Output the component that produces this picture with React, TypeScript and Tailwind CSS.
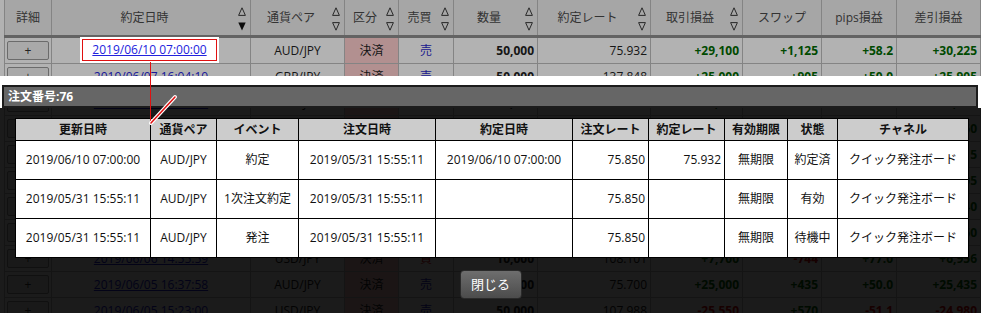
import React from "react";

type Row = {
  date: string;
  pair: string;
  side: "売" | "買";
  qty: string;
  rate: string;
  pl: string;
  swap: string;
  pips: string;
  net: string;
};

const rows: Row[] = [
  { date: "2019/06/10 07:00:00", pair: "AUD/JPY", side: "売", qty: "50,000", rate: "75.932", pl: "+29,100", swap: "+1,125", pips: "+58.2", net: "+30,225" },
  { date: "2019/06/07 16:04:10", pair: "GBP/JPY", side: "売", qty: "50,000", rate: "137.848", pl: "+25,000", swap: "+905", pips: "+50.0", net: "+25,905" },
  { date: "2019/06/07 11:20:41", pair: "USD/JPY", side: "買", qty: "10,000", rate: "108.250", pl: "+3,400", swap: "-120", pips: "+34.0", net: "+3,280" },
  { date: "2019/06/07 09:15:02", pair: "EUR/JPY", side: "売", qty: "20,000", rate: "122.105", pl: "+4,200", swap: "+60", pips: "+21.0", net: "+4,260" },
  { date: "2019/06/06 21:40:33", pair: "AUD/JPY", side: "売", qty: "30,000", rate: "75.640", pl: "+6,000", swap: "+315", pips: "+20.0", net: "+6,315" },
  { date: "2019/06/06 18:02:17", pair: "NZD/JPY", side: "売", qty: "30,000", rate: "71.880", pl: "+7,500", swap: "+405", pips: "+25.0", net: "+7,905" },
  { date: "2019/06/06 16:30:50", pair: "GBP/JPY", side: "買", qty: "10,000", rate: "137.210", pl: "+5,100", swap: "-60", pips: "+51.0", net: "+5,040" },
  { date: "2019/06/06 15:12:08", pair: "USD/JPY", side: "買", qty: "10,000", rate: "108.320", pl: "+2,400", swap: "-40", pips: "+24.0", net: "+2,360" },
  { date: "2019/06/06 14:55:59", pair: "USD/JPY", side: "買", qty: "10,000", rate: "108.101", pl: "+7,700", swap: "-744", pips: "+77.0", net: "+6,956" },
  { date: "2019/06/05 16:37:58", pair: "AUD/JPY", side: "売", qty: "50,000", rate: "75.700", pl: "+25,000", swap: "+435", pips: "+50.0", net: "+25,435" },
  { date: "2019/06/05 15:23:00", pair: "USD/JPY", side: "売", qty: "50,000", rate: "107.988", pl: "-25,550", swap: "+570", pips: "-51.1", net: "-24,980" },
];

const GRID = "grid grid-cols-[48px_199px_94px_54px_55px_84px_113px_92px_79px_75px_84px]";

function Arrows({ active }: { active?: boolean }) {
  return (
    <span className="absolute right-[4px] top-[7px] flex flex-col gap-[6px]">
      <svg width="8" height="9" viewBox="0 0 8 9">
        <path d="M4 0.8 L7.4 8.4 L0.6 8.4 Z" fill="none" stroke="#3a3a3a" strokeWidth="1" />
      </svg>
      {active ? (
        <svg width="8" height="9" viewBox="0 0 8 9">
          <path d="M0.3 0.6 L7.7 0.6 L4 8.6 Z" fill="#111" />
        </svg>
      ) : (
        <svg width="8" height="9" viewBox="0 0 8 9">
          <path d="M0.6 0.6 L7.4 0.6 L4 8.2 Z" fill="none" stroke="#3a3a3a" strokeWidth="1" />
        </svg>
      )}
    </span>
  );
}

const headers: { label: string; sort?: "on" | "active" }[] = [
  { label: "詳細" },
  { label: "約定日時", sort: "active" },
  { label: "通貨ペア", sort: "on" },
  { label: "区分", sort: "on" },
  { label: "売買", sort: "on" },
  { label: "数量", sort: "on" },
  { label: "約定レート", sort: "on" },
  { label: "取引損益", sort: "on" },
  { label: "スワップ" },
  { label: "pips損益" },
  { label: "差引損益" },
];

function signColor(v: string) {
  return v.startsWith("-") ? "text-[#dd0000]" : "text-[#006a00]";
}

function BgTable() {
  return (
    <div className="w-[981px]">
      <div className={`${GRID} ml-[4px] h-[38px] bg-[#eeeeee] border-b-[3px] border-[#8f8f8f]`}>
        {headers.map((h, i) => (
          <div
            key={h.label}
            className={`relative flex items-center justify-center border-r border-[#bdbdbd] text-[12px] text-[#4a4a4a] ${i === 0 ? "border-l" : ""} ${h.sort ? "pr-[13px]" : ""}`}
          >
            {h.label}
            {h.sort && <Arrows active={h.sort === "active"} />}
          </div>
        ))}
      </div>
      {rows.map((r, i) => (
        <div key={i} className={`${GRID} ml-[4px] h-[26px] text-[12px] text-[#222]`}>
          <div className="flex items-center justify-center border-l border-r border-b border-[#bdbdbd]">
            <div className="w-[42px] h-[19px] flex items-center justify-center border border-[#9a9a9a] rounded-[2px] bg-[#f2f2f2] text-[#333]">
              +
            </div>
          </div>
          <div className="flex items-center justify-center border-r border-b border-[#bdbdbd]">
            <span className="text-[#2222dd] underline">{r.date}</span>
          </div>
          <div className="flex items-center justify-center border-r border-b border-[#bdbdbd]">{r.pair}</div>
          <div className="flex items-center justify-center border-r border-b border-[#bdbdbd] bg-[#ffcfcf]">決済</div>
          <div className={`flex items-center justify-center border-r border-b border-[#bdbdbd] ${r.side === "売" ? "text-[#2a2acc]" : "text-[#dd0000]"}`}>
            {r.side}
          </div>
          <div className="flex items-center justify-end pr-[3px] border-r border-b border-[#bdbdbd] font-bold">{r.qty}</div>
          <div className="flex items-center justify-end pr-[3px] border-r border-b border-[#bdbdbd]">{r.rate}</div>
          <div className={`flex items-center justify-end pr-[3px] border-r border-b border-[#bdbdbd] font-bold ${signColor(r.pl)}`}>{r.pl}</div>
          <div className={`flex items-center justify-end pr-[3px] border-r border-b border-[#bdbdbd] font-bold ${signColor(r.swap)}`}>{r.swap}</div>
          <div className={`flex items-center justify-end pr-[3px] border-r border-b border-[#bdbdbd] font-bold ${signColor(r.pips)}`}>{r.pips}</div>
          <div className={`flex items-center justify-end pr-[3px] border-r border-b border-[#bdbdbd] font-bold ${signColor(r.net)}`}>{r.net}</div>
        </div>
      ))}
    </div>
  );
}

const detailHeaders = ["更新日時", "通貨ペア", "イベント", "注文日時", "約定日時", "注文レート", "約定レート", "有効期限", "状態", "チャネル"];
const detailWidths = ["w-[135px]", "w-[66px]", "w-[82px]", "w-[137px]", "w-[137px]", "w-[76px]", "w-[76px]", "w-[63px]", "w-[50px]", "w-[131px]"];

const detailRows = [
  ["2019/06/10 07:00:00", "AUD/JPY", "約定", "2019/05/31 15:55:11", "2019/06/10 07:00:00", "75.850", "75.932", "無期限", "約定済", "クイック発注ボード"],
  ["2019/05/31 15:55:11", "AUD/JPY", "1次注文約定", "2019/05/31 15:55:11", "", "75.850", "", "無期限", "有効", "クイック発注ボード"],
  ["2019/05/31 15:55:11", "AUD/JPY", "発注", "2019/05/31 15:55:11", "", "75.850", "", "無期限", "待機中", "クイック発注ボード"],
];

function DetailTable() {
  return (
    <table className="ml-[15px] self-start table-fixed border-collapse w-[953px] bg-white text-[12px] text-[#111]">
      <colgroup>
        {detailWidths.map((w, i) => (
          <col key={i} className={w} />
        ))}
      </colgroup>
      <thead>
        <tr>
          {detailHeaders.map((h) => (
            <th key={h} className="h-[22px] p-0 border border-black bg-[#cccccc] font-bold text-center">
              {h}
            </th>
          ))}
        </tr>
      </thead>
      <tbody>
        {detailRows.map((r, i) => (
          <tr key={i}>
            {r.map((c, j) => (
              <td
                key={j}
                className={`h-[39px] p-0 border border-black ${j === 5 || j === 6 ? "text-right pr-[3px]" : "text-center"}`}
              >
                {c}
              </td>
            ))}
          </tr>
        ))}
      </tbody>
    </table>
  );
}

export default function App() {
  return (
    <div className="relative w-[981px] h-[313px] overflow-hidden bg-white font-['Open_Sans','Noto_Sans_CJK_JP',sans-serif]">
      <BgTable />
      <div className="absolute inset-0 bg-black/30" />

      {/* highlighted cell */}
      <div className="absolute left-[80px] top-[37px] w-[139px] h-[26px] bg-white p-[2px]">
        <div className="h-full border border-[#e01010] flex items-center justify-center text-[12px]">
          <span className="text-[#2222dd] underline">2019/06/10 07:00:00</span>
        </div>
      </div>

      {/* modal */}
      <div className="absolute inset-x-0 top-[76px] bottom-0 flex flex-col">
        <div className="bg-white pt-[9px] pl-[2px] pr-[3px]">
          <div className="h-[23px] border-2 border-[#1c1c1c] bg-[#666666] flex items-center pl-[4px] text-[12px] font-bold text-white">
            注文番号:76
          </div>
        </div>
        <div className="flex-1 bg-black/85 flex flex-col items-center pt-[10px]">
          <DetailTable />
          <button className="mt-[12px] w-[62px] h-[29px] rounded-[4px] border border-[#2a2a2a] bg-linear-to-b from-[#6e6e6e] to-[#4c4c4c] text-white text-[13px] flex items-center justify-center">
            閉じる
          </button>
        </div>
      </div>

      {/* callout line */}
      <svg className="absolute inset-0 pointer-events-none" width="981" height="313">
        <line x1="150.5" y1="62" x2="150.5" y2="124" stroke="#e01010" strokeWidth="1" />
        <line x1="151" y1="123" x2="175" y2="97" stroke="#ffffff" strokeWidth="4" strokeLinecap="round" />
        <line x1="151" y1="123" x2="175" y2="97" stroke="#e01010" strokeWidth="1.5" strokeLinecap="round" />
      </svg>
    </div>
  );
}
